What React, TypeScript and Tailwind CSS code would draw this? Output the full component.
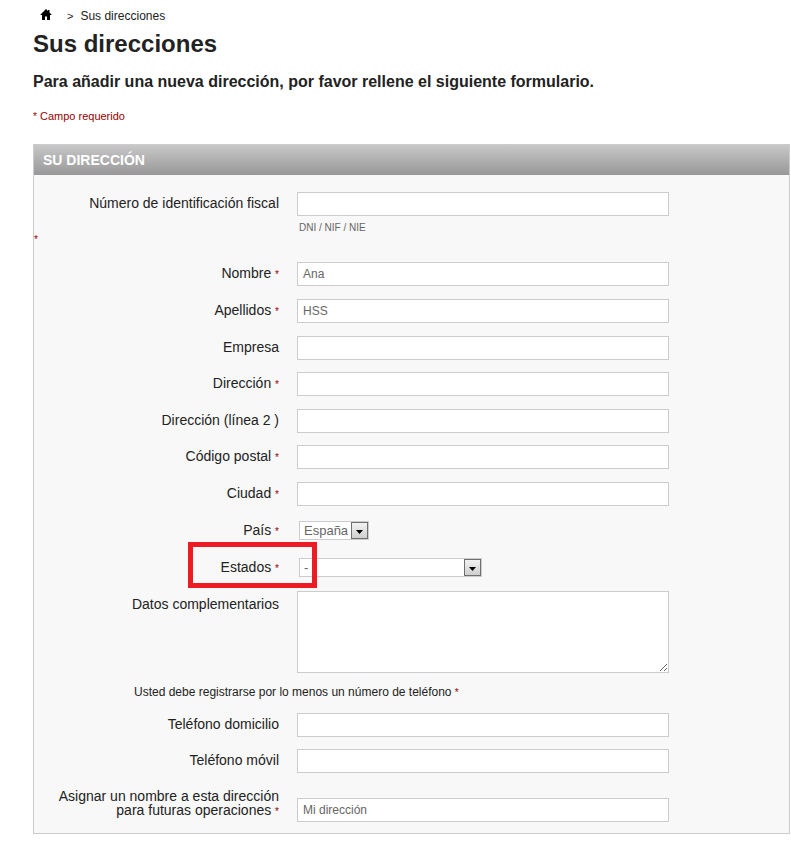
import React from "react";

function Star() {
  return <span className="text-[10px] leading-none text-[#990000]">*</span>;
}

const labelClass =
  "w-[245px] shrink-0 pt-1 text-right text-sm leading-[14px] text-[#222222]";
const inputClass =
  "h-6 w-full max-w-[372px] border border-[#cccccc] bg-white px-[5px] text-xs text-[#666666] outline-none";

type FieldProps = {
  id: string;
  label: string;
  required?: boolean;
  value?: string;
};

function Field({ id, label, required, value }: FieldProps) {
  return (
    <div className="flex gap-[18px]">
      <label htmlFor={id} className={labelClass}>
        {label} {required && <Star />}
      </label>
      <input id={id} type="text" defaultValue={value} className={inputClass} />
    </div>
  );
}

type SelectFieldProps = {
  id: string;
  label: string;
  option: string;
  width: string;
  marked?: boolean;
};

function SelectField({ id, label, option, width, marked }: SelectFieldProps) {
  return (
    <div className="relative flex h-6 gap-5">
      <label htmlFor={id} className={labelClass}>
        {label} <Star />
      </label>
      <div className={`relative mt-[2px] h-[19px] ${width}`}>
        <select
          id={id}
          className="block h-full w-full appearance-none border border-[#cccccc] bg-white px-1 text-[13px] leading-4 text-[#666666] outline-none"
        >
          <option>{option}</option>
        </select>
        <span className="pointer-events-none absolute top-px right-px flex h-[17px] w-[17px] items-center justify-center border border-[#707070] bg-linear-to-b from-[#f2f2f2] to-[#cfcfcf]">
          <svg width="7" height="4" viewBox="0 0 7 4" aria-hidden="true" className="mt-[2px]">
            <path d="M0 0h7L3.5 4z" fill="#000" />
          </svg>
        </span>
      </div>
      {marked && (
        <span className="pointer-events-none absolute -top-[14px] left-[154px] h-[46px] w-[129px] border-5 border-[#ed1c24]" />
      )}
    </div>
  );
}

export default function App() {
  return (
    <main className="bg-white pt-2 pr-px pl-[33px] font-['Liberation_Sans',Arial,sans-serif] text-[#222222]">
      <nav className="flex h-4 items-center pl-[7px] text-xs">
        <a href="#" aria-label="Inicio">
          <svg width="12" height="11" viewBox="0 0 12 11" aria-hidden="true" className="mb-1">
            <path d="M6 0 .5 5.5V6H2v5h3V7.500h2V11h3V6h1.500v-.5L9.500 3.500V1H8v1z" fill="#000" />
          </svg>
        </a>
        <span className="ml-[15px] text-[11px]">&gt;</span>
        <span className="ml-[7px]">Sus direcciones</span>
      </nav>
      <h1 className="mt-[6px] text-2xl leading-7 font-bold">Sus direcciones</h1>
      <h2 className="mt-3 text-base leading-6 font-bold">
        Para añadir una nueva dirección, por favor rellene el siguiente formulario.
      </h2>
      <p className="mt-[14px] text-[11px] leading-4 text-[#990000]">
        <Star /> Campo requerido
      </p>

      <form className="mt-5 border border-[#cccccc] bg-[#f8f8f8] pb-[11px]">
        <h3 className="h-[30px] bg-linear-to-b from-[#c8c8c8] to-[#989898] pl-[9px] text-sm leading-[30px] font-bold text-white">
          SU DIRECCIÓN
        </h3>
        <div className="mt-[17px]">
          <Field id="dni" label="Número de identificación fiscal" />
          <p className="mt-1 pl-[265px] text-[10px] leading-4 text-[#666666]">DNI / NIF / NIE</p>
          <p className="text-[10px] leading-2 text-[#990000]">*</p>
        </div>

        <div className="mt-[18px] flex flex-col gap-3">
          <div className="flex flex-col gap-[13px]">
            <Field id="nombre" label="Nombre" required value="Ana" />
            <Field id="apellidos" label="Apellidos" required value="HSS" />
            <Field id="empresa" label="Empresa" />
          </div>
          <div className="flex flex-col gap-[13px]">
            <Field id="direccion" label="Dirección" required />
            <Field id="direccion2" label="Dirección (línea 2 )" />
          </div>
          <div className="flex flex-col gap-[13px]">
            <Field id="postal" label="Código postal" required />
            <Field id="ciudad" label="Ciudad" required />
            <SelectField id="pais" label="País" option="España" width="w-[70px]" />
            <SelectField id="estado" label="Estados" option="-" width="w-[183px]" marked />
          </div>
        </div>

        <div className="mt-[11px] flex gap-[18px]">
          <label htmlFor="datos" className={labelClass}>
            <span className="block pt-[2px]">Datos complementarios</span>
          </label>
          <textarea
            id="datos"
            className="block h-[82px] w-full max-w-[372px] border border-[#cccccc] bg-white p-1 text-xs text-[#666666] outline-none"
          />
        </div>

        <p className="mt-[11px] pl-[100px] text-xs leading-4">
          Usted debe registrarse por lo menos un número de teléfono <Star />
        </p>

        <div className="mt-[13px] flex flex-col gap-3">
          <Field id="domicilio" label="Teléfono domicilio" />
          <Field id="movil" label="Teléfono móvil" />
        </div>
        <div className="mt-3 flex items-end gap-[18px]">
          <label htmlFor="alias" className={`${labelClass} pb-[5px]`}>
            Asignar un nombre a esta dirección para futuras operaciones <Star />
          </label>
          <input id="alias" type="text" defaultValue="Mi dirección" className={inputClass} />
        </div>
      </form>
    </main>
  );
}
